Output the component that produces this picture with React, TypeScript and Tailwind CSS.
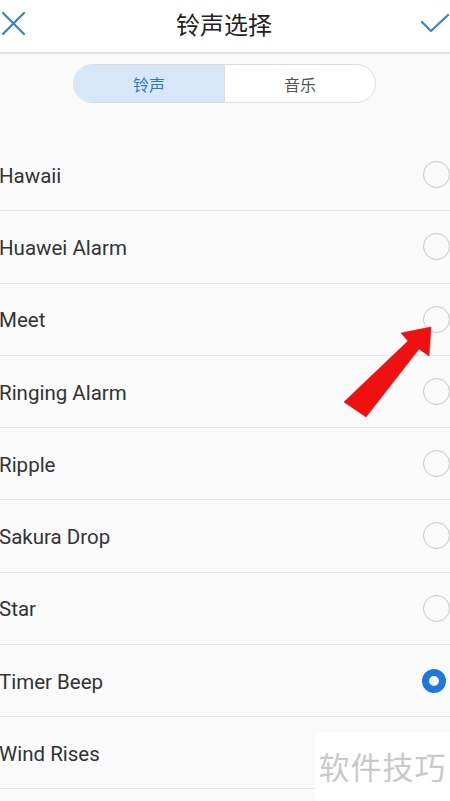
import React from "react";

const items = [
  "Hawaii",
  "Huawei Alarm",
  "Meet",
  "Ringing Alarm",
  "Ripple",
  "Sakura Drop",
  "Star",
  "Timer Beep",
  "Wind Rises",
];

export default function App() {
  return (
    <div
      className="relative w-[450px] h-[801px] overflow-hidden bg-[#fafafa]"
      style={{ fontFamily: "Roboto, 'Noto Sans CJK SC', sans-serif" }}
    >
      {/* Header */}
      <div className="h-[54px] bg-white flex items-center justify-between border-b-2 border-[#e3e3e3]">
        <svg width="28" height="28" viewBox="0 0 28 28" className="ml-[0px] mb-[4px]">
          <path d="M3 3 L24 24 M24 3 L3 24" stroke="#3f7fbf" strokeWidth="2.2" strokeLinecap="round" />
        </svg>
        <div className="text-[24px] text-[#222] mb-[4px]" style={{ fontFamily: "'Noto Sans CJK SC', sans-serif" }}>
          铃声选择
        </div>
        <svg width="30" height="20" viewBox="0 0 30 20" className="mb-[4px]">
          <path d="M2 8 L11 17 L28 1" stroke="#3f7fbf" strokeWidth="2.2" fill="none" strokeLinecap="round" strokeLinejoin="round" />
        </svg>
      </div>

      {/* Segmented control */}
      <div className="flex justify-center pt-[10px]">
        <div className="ml-[-1px] flex w-[303px] h-[39px] rounded-full border border-[#d9dde2] overflow-hidden bg-white">
          <div
            className="flex-1 flex items-center justify-center bg-[#d8e7f8] text-[#2e7ac6] text-[16px] border-r border-[#d9dde2]"
            style={{ fontFamily: "'Noto Sans CJK SC', sans-serif" }}
          >
            铃声
          </div>
          <div
            className="flex-1 flex items-center justify-center text-[#555] text-[16px]"
            style={{ fontFamily: "'Noto Sans CJK SC', sans-serif" }}
          >
            音乐
          </div>
        </div>
      </div>

      {/* List */}
      <div className="mt-[36px]">
        {items.map((name) => (
          <div
            key={name}
            className="h-[72.25px] flex items-center justify-between border-b border-[#e5e5e5]"
          >
            <span className="text-[20.5px] text-[#333] ml-[-1px] mt-[3px]">{name}</span>
            {name === "Timer Beep" ? (
              <div className="w-[24px] h-[24px] rounded-full border-[7px] border-[#1c78de] mr-[4px] mt-[2px]" />
            ) : (
              <div className="w-[27px] h-[27px] rounded-full border-[1.5px] border-[#c6c6c6] mr-[0px]" />
            )}
          </div>
        ))}
      </div>

      {/* Red arrow */}
      <svg className="absolute left-0 top-0" width="450" height="801" viewBox="0 0 450 801">
        <polygon
          points="431,327 429,356 419,349 366,417 344,402 408,341 401,333"
          fill="#f01010"
          stroke="#d00000"
          strokeWidth="0.5"
        />
      </svg>

      {/* Watermark */}
      <div className="absolute left-[315px] top-[732px] w-[135px] h-[69px] bg-white flex items-center justify-center">
        <span
          className="text-[31px] text-[#c9c9c9] tracking-[1px]"
          style={{ fontFamily: "'Noto Sans CJK SC', sans-serif" }}
        >
          软件技巧
        </span>
      </div>
    </div>
  );
}
